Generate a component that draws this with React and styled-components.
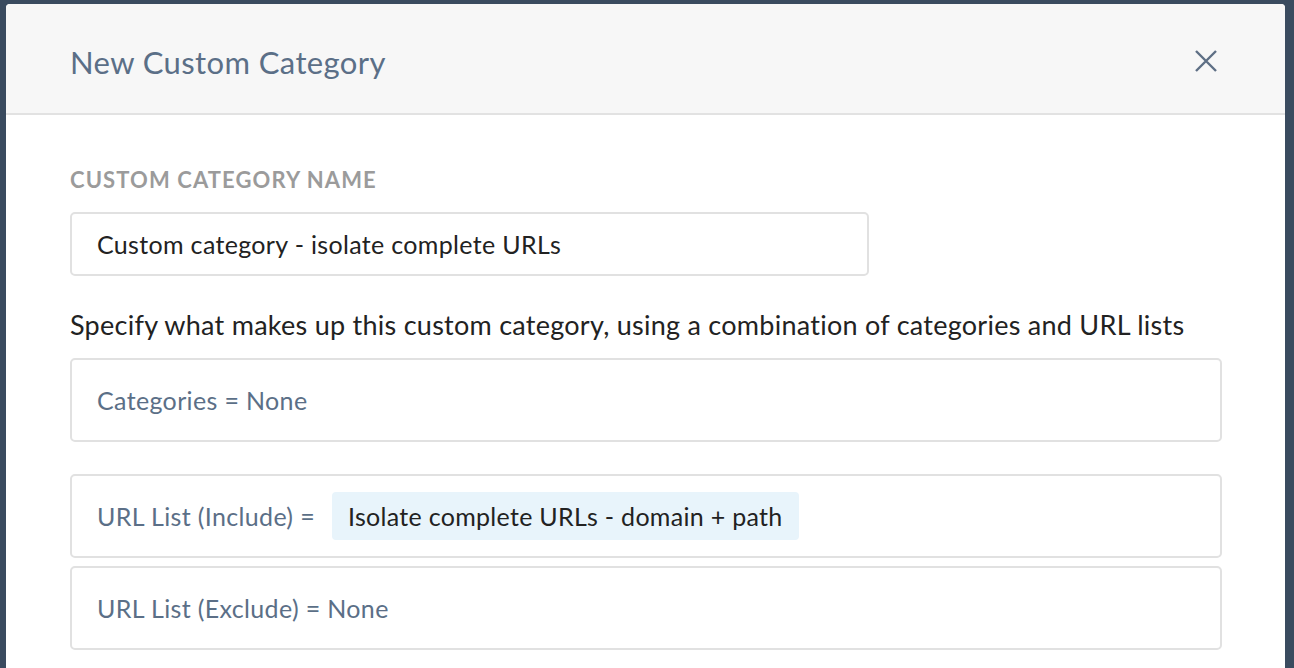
import React from "react";
import styled, { createGlobalStyle } from "styled-components";

const Global = createGlobalStyle`
  html, body { margin: 0; padding: 0; }
  body {
    background: #3a4b5f;
    font-family: Lato, "Open Sans", sans-serif;
    overflow: hidden;
  }
`;

const Page = styled.div`
  width: 1294px;
  height: 668px;
  padding: 4px 0 0 6px;
  box-sizing: border-box;
  overflow: hidden;
`;

const Modal = styled.div`
  width: 1279px;
  height: 664px;
  background: #ffffff;
  border-radius: 4px 4px 0 0;
  overflow: hidden;
`;

const Header = styled.div`
  height: 111px;
  box-sizing: border-box;
  padding: 5px 68px 0 64px;
  display: flex;
  align-items: center;
  justify-content: space-between;
  background: #f7f7f7;
  border-bottom: 2px solid #e2e2e2;
`;

const Title = styled.h1`
  margin: 3px 0 0;
  font-size: 31px;
  letter-spacing: 0.4px;
  font-weight: 400;
  line-height: 1.2;
  color: #5b6f87;
`;

const CloseButton = styled.button`
  border: 0;
  background: transparent;
  padding: 0;
  width: 22px;
  height: 22px;
  display: flex;
  align-items: center;
  justify-content: center;
  cursor: pointer;
`;

const Body = styled.div`
  padding: 52px 63px 0 64px;
`;

const Label = styled.div`
  font-size: 22px;
  letter-spacing: 1.1px;
  line-height: 26px;
  font-weight: 700;
  color: #9b9b9b;
  text-transform: uppercase;
`;

const NameInput = styled.div`
  margin-top: 19px;
  width: 799px;
  height: 64px;
  box-sizing: border-box;
  border: 2px solid #e1e1e1;
  border-radius: 5px;
  padding: 0 25px;
  display: flex;
  align-items: center;
  font-size: 25px;
  letter-spacing: 0.33px;
  color: #222222;
`;

const Description = styled.p`
  margin: 33px 0 17px;
  font-size: 27px;
  letter-spacing: 0.26px;
  line-height: 32px;
  color: #222222;
`;

const RuleBox = styled.div`
  box-sizing: border-box;
  min-height: 84px;
  border: 2px solid #e1e1e1;
  border-radius: 5px;
  padding: 16px 25px;
  display: flex;
  align-items: center;
  gap: 17px;
  margin-top: ${(p) => p.$gap || 0}px;
  font-size: 25px;
  letter-spacing: 0.35px;
  color: #5b6f87;
`;

const Tag = styled.span`
  display: inline-flex;
  align-items: center;
  height: 48px;
  padding: 0 16px;
  border-radius: 4px;
  background: #e8f4fb;
  color: #222222;
  letter-spacing: 0.3px;
`;

export default function App() {
  return (
    <>
      <Global />
      <Page>
        <Modal>
          <Header>
            <Title>New Custom Category</Title>
            <CloseButton aria-label="Close">
              <svg width="22" height="22" viewBox="0 0 22 22">
                <path
                  d="M1 1 L21 21 M21 1 L1 21"
                  stroke="#5e6f85"
                  strokeWidth="2.4"
                  fill="none"
                />
              </svg>
            </CloseButton>
          </Header>
          <Body>
            <Label>Custom Category Name</Label>
            <NameInput>Custom category - isolate complete URLs</NameInput>
            <Description>
              Specify what makes up this custom category, using a combination of
              categories and URL lists
            </Description>
            <RuleBox>Categories = None</RuleBox>
            <RuleBox $gap={32}>
              <span>URL List (Include) =</span>
              <Tag>Isolate complete URLs - domain + path</Tag>
            </RuleBox>
            <RuleBox $gap={8}>URL List (Exclude) = None</RuleBox>
          </Body>
        </Modal>
      </Page>
    </>
  );
}
